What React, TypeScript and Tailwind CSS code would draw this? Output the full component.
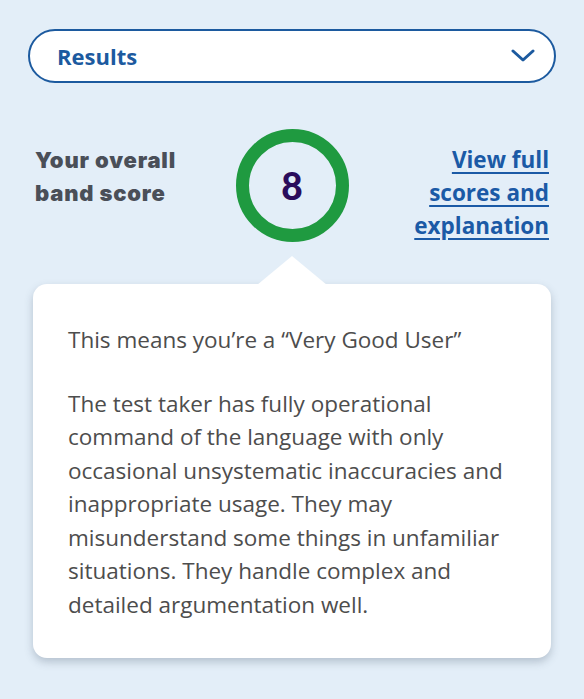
import React from "react";

export default function App() {
  return (
    <div className="min-h-[699px] w-full bg-[#e3eef8] pt-[29px] pb-10" style={{ fontFamily: '"Open Sans", sans-serif' }}>
      <div className="mx-[28px] flex h-[54px] items-center justify-between rounded-full border-[2.5px] border-[#1c5a9f] bg-white pl-[27px] pr-[19px]">
        <span className="text-[22px] font-bold text-[#1c5a9f]">Results</span>
        <svg width="24" height="14" viewBox="0 0 24 14" fill="none">
          <path d="M2 2 L12 11 L22 2" stroke="#1c5a9f" strokeWidth="3" strokeLinecap="round" strokeLinejoin="round" />
        </svg>
      </div>

      <div className="mt-[46px] grid grid-cols-[1fr_auto_1fr] items-start px-[35px]">
        <div className="mt-[15px] text-[22px] font-black leading-[33px] tracking-[0.8px] text-[#4a4f58]" style={{ fontFamily: 'Inter, sans-serif' }}>
          Your overall
          <br />
          band score
        </div>
        <div className="flex h-[113px] w-[113px] items-center justify-center rounded-full border-[13px] border-[#1f9a40]">
          <span className="text-[37px] font-black leading-none text-[#2a0c5c]" style={{ fontFamily: 'Lato, sans-serif' }}>8</span>
        </div>
        <div className="mt-[14px] text-right text-[22.5px] font-bold leading-[33px]">
          <a href="#" className="text-[#1b5aa6] underline decoration-[2px] underline-offset-[4px]">
            View full
            <br />
            scores and
            <br />
            explanation
          </a>
        </div>
      </div>

      <div className="relative mx-[33px] mt-[42px] rounded-[14px] bg-white pl-[35px] pr-[30px] pt-[39px] pb-[37px] text-[22.5px] leading-[33.5px] text-[#4d4d4d] shadow-[0_4px_8px_rgba(60,80,100,0.28)]">
        <svg className="absolute left-[224px] top-[-28px]" width="70" height="29" viewBox="0 0 70 29">
          <polygon points="0,29 35,0 70,29" fill="#ffffff" />
        </svg>
        <p>This means you’re a “Very Good User”</p>
        <p className="mt-[30px]">
          The test taker has fully operational command of the language with only occasional unsystematic inaccuracies and inappropriate usage. They may misunderstand some things in unfamiliar situations. They handle complex and detailed argumentation well.
        </p>
      </div>
    </div>
  );
}
